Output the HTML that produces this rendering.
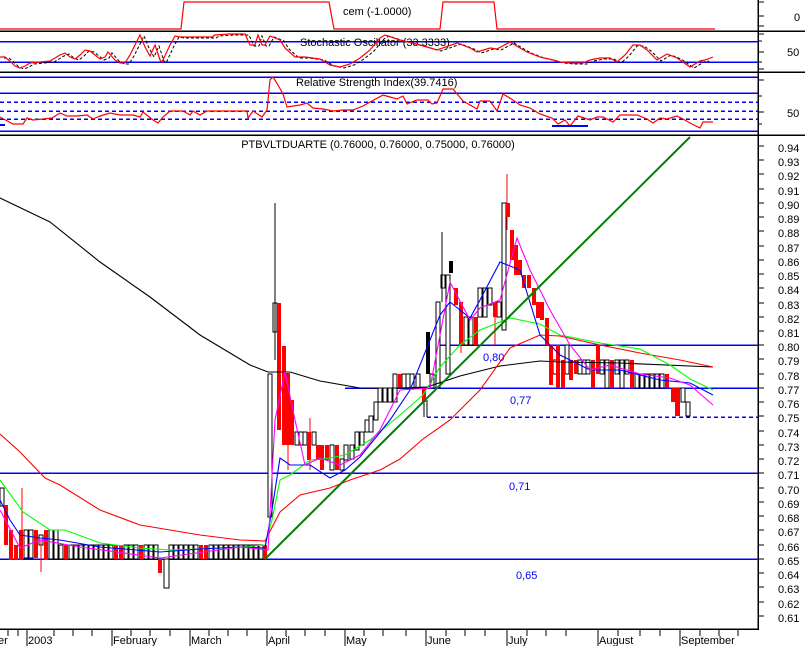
<!DOCTYPE html>
<html><head><meta charset="utf-8"><style>
html,body{margin:0;padding:0;background:#fff;}
svg{display:block;font-family:"Liberation Sans",sans-serif;}
</style></head><body>
<svg width="805" height="646" viewBox="0 0 805 646" xmlns="http://www.w3.org/2000/svg" shape-rendering="crispEdges">
<rect width="805" height="646" fill="#fff"/>
<g stroke="#000" stroke-width="1.5">
<line x1="0" y1="31" x2="805" y2="31"/>
<line x1="0" y1="72" x2="805" y2="72"/>
<line x1="0" y1="135" x2="805" y2="135"/>
<line x1="758" y1="0" x2="758" y2="630"/>
<line x1="0" y1="629" x2="758" y2="629"/>
</g>
<!-- top panel -->
<polyline fill="none" stroke="#f00" stroke-width="1.2" shape-rendering="auto" points="0,29 181,29 184,2 329,2 334,29 440,29 443,2 494,2 497,29 715,29"/>
<text x="343" y="15" font-size="11">cem (-1.0000)</text>
<g stroke="#000"><line x1="758" y1="2" x2="764" y2="2"/><line x1="758" y1="16" x2="764" y2="16"/><line x1="758" y1="26" x2="764" y2="26"/></g>
<text x="794" y="21" font-size="11">0</text>
<!-- stochastic -->
<g stroke="#00f" stroke-width="1.5"><line x1="0" y1="41.5" x2="758" y2="41.5"/><line x1="0" y1="62" x2="758" y2="62"/></g>
<text x="300" y="46" font-size="11">Stochastic Oscillator (33.3333)</text>
<g fill="none" shape-rendering="auto">
<polyline stroke="#000" stroke-dasharray="3,2" stroke-width="1" transform="translate(4,1)" points="0,57 5,57 12,63 15,66 20,68 25,66 30,63 40,62 50,61 55,58 60,55 65,53 70,57 75,59 80,55 85,50 90,51 95,55 100,59 105,57 108,52 115,60 120,63 125,63 130,55 135,45 140,35 145,47 150,56 155,45 160,60 162,62 170,45 175,36 180,37 212,37 215,35 230,34 245,34 250,45 255,45 258,35 262,45 265,45 270,36 275,38 280,40 285,48 295,57 305,57 320,59 325,62 330,65 340,67 350,64 360,58 370,50 375,44 380,38 385,35 400,40 420,45 437,50 457,43 470,48 477,52 490,48 497,49 510,42 520,48 527,52 540,57 553,60 560,62 570,63 583,63 590,60 600,58 610,58 617,62 625,55 633,45 640,45 647,50 657,60 667,54 677,58 690,67 700,61 705,60"/>
<polyline stroke="#f00" stroke-width="1.2" points="0,57 5,57 12,63 15,66 20,68 25,66 30,63 40,62 50,61 55,58 60,55 65,53 70,57 75,59 80,55 85,50 90,51 95,55 100,59 105,57 108,52 115,60 120,63 125,63 130,55 135,45 140,35 145,47 150,56 155,45 160,60 162,62 170,45 175,36 180,37 212,37 215,35 230,34 245,34 250,45 255,45 258,35 262,45 265,45 270,36 275,38 280,40 285,48 295,57 305,57 320,59 325,62 330,65 340,67 350,64 360,58 370,50 375,44 380,38 385,35 400,40 420,45 437,50 457,43 470,48 477,52 490,48 497,49 510,42 520,48 527,52 540,57 553,60 560,62 570,63 583,63 590,60 600,58 610,58 617,62 625,55 633,45 640,45 647,50 657,60 667,54 677,58 690,67 700,61 705,60 713,57"/>
</g>
<g stroke="#000"><line x1="758" y1="34" x2="764" y2="34"/><line x1="758" y1="41" x2="762" y2="41"/><line x1="758" y1="52" x2="764" y2="52"/><line x1="758" y1="62" x2="762" y2="62"/><line x1="758" y1="69" x2="764" y2="69"/></g>
<text x="787" y="56" font-size="11">50</text>
<!-- RSI -->
<g stroke="#00f" stroke-width="1.5"><line x1="0" y1="77" x2="758" y2="77"/><line x1="0" y1="93" x2="758" y2="93"/><line x1="0" y1="131" x2="758" y2="131"/></g>
<g stroke="#00f" stroke-width="1.5" stroke-dasharray="4,3"><line x1="0" y1="102" x2="758" y2="102"/><line x1="0" y1="111" x2="758" y2="111"/><line x1="0" y1="119" x2="758" y2="119"/></g>
<text x="296" y="86" font-size="11">Relative Strength Index(39.7416)</text>
<polyline fill="none" stroke="#f00" stroke-width="1.2" shape-rendering="auto" points="0,117 13,124 23,124 27,118 33,120 43,119 52,118 60,113 67,116 77,116 87,115 93,119 100,116 110,113 120,115 133,115 140,117 143,112 153,120 158,123 163,117 170,111 183,111 190,115 193,111 200,115 207,111 247,111 248,118 253,111 262,117 267,110 270,80 273,77 278,85 283,94 287,107 300,105 307,103 313,108 323,109 333,111 343,110 353,110 363,106 370,102 383,95 390,97 397,99 403,96 407,104 417,100 428,100 432,104 437,103 443,89 453,89 463,101 477,109 480,101 490,101 497,111 503,94 513,100 520,105 530,108 540,114 552,118 558,124 565,120 570,126 578,116 590,120 597,117 603,117 613,122 620,115 637,115 647,119 653,123 660,118 667,119 677,116 683,119 690,123 700,128 703,122 713,122"/>
<g stroke="#00f" stroke-width="2"><line x1="0" y1="125" x2="5" y2="125"/><line x1="552" y1="126" x2="588" y2="126"/></g>
<g stroke="#000"><line x1="758" y1="80" x2="764" y2="80"/><line x1="758" y1="96" x2="762" y2="96"/><line x1="758" y1="112" x2="764" y2="112"/><line x1="758" y1="124" x2="762" y2="124"/></g>
<text x="787" y="117" font-size="11">50</text>
<text x="378" y="148" font-size="11" text-anchor="middle">PTBVLTDUARTE (0.76000, 0.76000, 0.75000, 0.76000)</text>
<!-- price axis -->
<g stroke="#000">
<line x1="758" y1="146" x2="764" y2="146"/><line x1="758" y1="160" x2="764" y2="160"/><line x1="758" y1="174" x2="764" y2="174"/><line x1="758" y1="189" x2="764" y2="189"/><line x1="758" y1="203" x2="764" y2="203"/><line x1="758" y1="217" x2="764" y2="217"/><line x1="758" y1="231" x2="764" y2="231"/><line x1="758" y1="246" x2="764" y2="246"/><line x1="758" y1="260" x2="764" y2="260"/><line x1="758" y1="274" x2="764" y2="274"/><line x1="758" y1="288" x2="764" y2="288"/><line x1="758" y1="303" x2="764" y2="303"/><line x1="758" y1="317" x2="764" y2="317"/><line x1="758" y1="331" x2="764" y2="331"/><line x1="758" y1="345" x2="764" y2="345"/><line x1="758" y1="359" x2="764" y2="359"/><line x1="758" y1="374" x2="764" y2="374"/><line x1="758" y1="388" x2="764" y2="388"/><line x1="758" y1="402" x2="764" y2="402"/><line x1="758" y1="416" x2="764" y2="416"/><line x1="758" y1="431" x2="764" y2="431"/><line x1="758" y1="445" x2="764" y2="445"/><line x1="758" y1="459" x2="764" y2="459"/><line x1="758" y1="473" x2="764" y2="473"/><line x1="758" y1="488" x2="764" y2="488"/><line x1="758" y1="502" x2="764" y2="502"/><line x1="758" y1="516" x2="764" y2="516"/><line x1="758" y1="530" x2="764" y2="530"/><line x1="758" y1="545" x2="764" y2="545"/><line x1="758" y1="559" x2="764" y2="559"/><line x1="758" y1="573" x2="764" y2="573"/><line x1="758" y1="587" x2="764" y2="587"/><line x1="758" y1="602" x2="764" y2="602"/><line x1="758" y1="616" x2="764" y2="616"/>
</g>
<g font-size="11" fill="#000">
<text x="778" y="152">0.94</text><text x="778" y="166">0.93</text><text x="778" y="180">0.92</text><text x="778" y="195">0.91</text><text x="778" y="209">0.90</text><text x="778" y="223">0.89</text><text x="778" y="237">0.88</text><text x="778" y="252">0.87</text><text x="778" y="266">0.86</text><text x="778" y="280">0.85</text><text x="778" y="294">0.84</text><text x="778" y="309">0.83</text><text x="778" y="323">0.82</text><text x="778" y="337">0.81</text><text x="778" y="351">0.80</text><text x="778" y="365">0.79</text><text x="778" y="380">0.78</text><text x="778" y="394">0.77</text><text x="778" y="408">0.76</text><text x="778" y="422">0.75</text><text x="778" y="437">0.74</text><text x="778" y="451">0.73</text><text x="778" y="465">0.72</text><text x="778" y="479">0.71</text><text x="778" y="494">0.70</text><text x="778" y="508">0.69</text><text x="778" y="522">0.68</text><text x="778" y="536">0.67</text><text x="778" y="551">0.66</text><text x="778" y="565">0.65</text><text x="778" y="579">0.64</text><text x="778" y="593">0.63</text><text x="778" y="608">0.62</text><text x="778" y="622">0.61</text>
</g>
<g stroke="#00f" stroke-width="1.5">
<line x1="440" y1="345" x2="758" y2="345"/>
<line x1="345" y1="388" x2="758" y2="388"/>
<line x1="0" y1="473" x2="758" y2="473"/>
<line x1="0" y1="559" x2="758" y2="559"/>
</g>
<line x1="427" y1="417" x2="758" y2="417" stroke="#00f" stroke-width="1.5" stroke-dasharray="4,3"/>
<line x1="427" y1="400" x2="427" y2="417" stroke="#000"/>
<g font-size="11" fill="#00f"><text x="483" y="361">0,80</text><text x="510" y="404">0,77</text><text x="509" y="490">0,71</text><text x="516" y="579">0,65</text></g>
<!-- candles -->
<g stroke="#000" fill="#fff" stroke-width="1">
<rect x="0" y="488" width="4" height="18"/><rect x="24" y="530" width="4" height="28"/><rect x="29" y="530" width="4" height="28"/><rect x="39" y="535" width="4" height="10"/><rect x="49" y="530" width="4" height="29"/><rect x="54" y="530" width="4" height="29"/><rect x="59" y="545" width="4" height="14"/>
<rect x="69" y="545" width="4" height="14"/><rect x="74" y="545" width="4" height="14"/><rect x="79" y="545" width="4" height="14"/><rect x="84" y="545" width="4" height="14"/><rect x="89" y="545" width="4" height="14"/><rect x="94" y="545" width="4" height="14"/><rect x="99" y="545" width="4" height="14"/><rect x="104" y="545" width="4" height="14"/><rect x="109" y="545" width="4" height="14"/><rect x="124" y="545" width="4" height="14"/><rect x="129" y="545" width="4" height="14"/><rect x="134" y="545" width="4" height="14"/><rect x="144" y="545" width="4" height="14"/><rect x="149" y="545" width="4" height="14"/><rect x="154" y="545" width="4" height="14"/><rect x="164" y="559" width="5" height="29"/><rect x="169" y="545" width="4" height="14"/><rect x="174" y="545" width="4" height="14"/><rect x="179" y="545" width="4" height="14"/><rect x="184" y="545" width="4" height="14"/><rect x="189" y="545" width="4" height="14"/><rect x="194" y="545" width="4" height="14"/><rect x="209" y="545" width="4" height="14"/><rect x="214" y="545" width="4" height="14"/><rect x="219" y="545" width="4" height="14"/><rect x="224" y="545" width="4" height="14"/><rect x="229" y="545" width="4" height="14"/><rect x="234" y="545" width="4" height="14"/><rect x="239" y="545" width="4" height="14"/><rect x="244" y="545" width="4" height="14"/><rect x="249" y="545" width="4" height="14"/><rect x="254" y="545" width="4" height="14"/><rect x="259" y="545" width="4" height="14"/>
<rect x="268" y="374" width="4" height="143"/><rect x="273" y="303" width="4" height="29"/>
<rect x="295" y="432" width="4" height="13"/><rect x="299" y="432" width="4" height="13"/><rect x="303" y="432" width="4" height="13"/><rect x="312" y="432" width="4" height="13"/><rect x="330" y="445" width="4" height="25"/><rect x="340" y="459" width="4" height="11"/><rect x="344" y="445" width="4" height="15"/><rect x="350" y="445" width="4" height="14"/><rect x="355" y="432" width="4" height="18"/><rect x="360" y="432" width="4" height="13"/><rect x="365" y="420" width="4" height="12"/><rect x="369" y="416" width="4" height="16"/><rect x="374" y="402" width="4" height="18"/><rect x="378" y="388" width="4" height="14"/><rect x="383" y="388" width="4" height="14"/><rect x="388" y="388" width="4" height="14"/><rect x="393" y="374" width="4" height="28"/><rect x="402" y="374" width="4" height="14"/><rect x="406" y="374" width="4" height="14"/><rect x="410" y="374" width="4" height="14"/><rect x="416" y="374" width="4" height="14"/><rect x="430" y="374" width="4" height="14"/><rect x="436" y="302" width="4" height="86"/><rect x="441" y="275" width="4" height="13"/><rect x="446" y="275" width="4" height="99"/><rect x="464" y="317" width="4" height="28"/><rect x="469" y="317" width="4" height="28"/><rect x="478" y="288" width="4" height="29"/><rect x="483" y="288" width="4" height="29"/><rect x="488" y="288" width="4" height="17"/><rect x="497" y="302" width="4" height="15"/><rect x="502" y="203" width="4" height="127"/><rect x="553" y="360" width="4" height="14"/><rect x="565" y="345" width="4" height="29"/><rect x="578" y="360" width="4" height="14"/><rect x="582" y="360" width="4" height="14"/><rect x="586" y="360" width="4" height="14"/><rect x="600" y="360" width="4" height="14"/><rect x="605" y="360" width="4" height="28"/><rect x="615" y="360" width="4" height="14"/><rect x="620" y="360" width="4" height="28"/><rect x="625" y="360" width="4" height="14"/><rect x="635" y="374" width="4" height="14"/><rect x="640" y="374" width="4" height="14"/><rect x="645" y="374" width="4" height="14"/><rect x="650" y="374" width="4" height="14"/><rect x="655" y="374" width="4" height="14"/><rect x="660" y="374" width="4" height="14"/><rect x="681" y="388" width="4" height="14"/><rect x="686" y="402" width="4" height="14"/>
</g>
<g fill="#000"><rect x="426" y="332" width="4" height="42"/><rect x="449" y="261" width="4" height="12"/></g>
<g fill="#f00">
<rect x="4" y="505" width="4" height="40"/><rect x="9" y="530" width="4" height="30"/><rect x="14" y="545" width="4" height="15"/><rect x="19" y="530" width="4" height="30"/><rect x="34" y="530" width="4" height="28"/><rect x="44" y="530" width="4" height="30"/><rect x="64" y="545" width="4" height="14"/><rect x="114" y="545" width="4" height="14"/><rect x="119" y="545" width="4" height="14"/><rect x="139" y="545" width="4" height="14"/><rect x="158" y="559" width="4" height="14"/><rect x="199" y="545" width="4" height="14"/><rect x="204" y="545" width="4" height="14"/><rect x="263" y="545" width="4" height="14"/>
<rect x="277" y="303" width="4" height="127"/><rect x="282" y="346" width="4" height="99"/><rect x="286" y="373" width="4" height="72"/><rect x="290" y="400" width="4" height="45"/><rect x="307" y="432" width="4" height="28"/><rect x="316" y="445" width="4" height="15"/><rect x="320" y="445" width="4" height="25"/><rect x="325" y="445" width="4" height="15"/><rect x="335" y="445" width="4" height="25"/><rect x="398" y="374" width="4" height="14"/><rect x="422" y="388" width="4" height="14"/><rect x="454" y="288" width="4" height="17"/><rect x="459" y="302" width="4" height="43"/><rect x="474" y="317" width="4" height="28"/><rect x="493" y="302" width="4" height="15"/><rect x="506" y="203" width="4" height="14"/><rect x="510" y="230" width="4" height="30"/><rect x="514" y="245" width="4" height="30"/><rect x="518" y="260" width="4" height="15"/><rect x="522" y="275" width="4" height="13"/><rect x="527" y="275" width="4" height="13"/><rect x="532" y="288" width="4" height="17"/><rect x="536" y="302" width="4" height="16"/><rect x="540" y="302" width="4" height="18"/><rect x="545" y="318" width="4" height="27"/><rect x="549" y="345" width="4" height="40"/><rect x="556" y="345" width="4" height="43"/><rect x="561" y="360" width="4" height="28"/><rect x="569" y="360" width="4" height="20"/><rect x="574" y="360" width="4" height="14"/><rect x="591" y="360" width="4" height="28"/><rect x="596" y="345" width="4" height="29"/><rect x="610" y="360" width="4" height="28"/><rect x="630" y="360" width="4" height="28"/><rect x="665" y="374" width="4" height="14"/><rect x="671" y="388" width="4" height="14"/><rect x="675" y="388" width="5" height="28"/>
</g>
<g stroke="#000"><line x1="275" y1="203" x2="275" y2="360"/><line x1="442" y1="232" x2="442" y2="302"/><line x1="424" y1="400" x2="424" y2="417"/></g>
<g stroke="#f00"><line x1="22" y1="488" x2="22" y2="560"/><line x1="41" y1="540" x2="41" y2="572"/><line x1="288" y1="445" x2="288" y2="470"/><line x1="310" y1="418" x2="310" y2="470"/><line x1="461" y1="345" x2="461" y2="353"/><line x1="495" y1="317" x2="495" y2="345"/><line x1="507" y1="174" x2="507" y2="230"/></g>
<g fill="none" stroke-width="1.1" shape-rendering="auto">
<polyline stroke="#000" points="0,198 50,222 100,262 150,297 200,335 250,365 268,372 290,372 320,381 360,388 400,388 427,387 460,376 500,366 540,361 560,362 620,363 713,367"/>
<polyline stroke="#f00" points="0,434 20,452 45,478 60,485 100,510 140,525 170,530 200,535 240,540 265,541 280,512 300,495 330,488 350,480 380,470 400,459 423,439 450,420 480,390 510,348 540,335 560,336 600,345 640,353 680,360 713,367"/>
<polyline stroke="#0f0" points="0,480 23,512 50,530 65,530 100,543 140,548 170,550 200,549 240,547 265,545 272,520 280,480 290,475 310,460 330,458 345,455 370,440 400,415 423,395 440,367 460,345 480,330 510,318 540,324 560,335 600,343 640,349 670,365 690,379 713,390"/>
<polyline stroke="#00f" points="0,500 10,520 20,535 40,538 60,540 100,547 160,552 200,549 240,547 265,548 272,510 280,458 290,465 310,465 330,478 345,470 360,457 390,420 410,390 440,315 450,302 470,318 480,300 500,262 520,270 540,335 560,355 590,370 620,370 660,380 690,383 713,395"/>
<polyline stroke="#f0f" points="0,510 20,548 40,540 80,547 160,558 240,547 268,550 275,420 285,372 295,420 305,465 320,458 340,465 360,455 380,430 400,390 430,388 450,282 470,320 480,308 500,300 517,238 530,270 550,310 570,345 590,370 610,365 640,374 670,378 690,385 713,405"/>
<line stroke="#008000" stroke-width="2" x1="265" y1="559" x2="690" y2="137"/>
</g>
<g stroke="#000">
<line x1="8" y1="629" x2="8" y2="636"/><line x1="18" y1="629" x2="18" y2="636"/><line x1="27" y1="629" x2="27" y2="646"/><line x1="54" y1="629" x2="54" y2="636"/><line x1="73" y1="629" x2="73" y2="636"/><line x1="92" y1="629" x2="92" y2="636"/><line x1="112" y1="629" x2="112" y2="646"/><line x1="131" y1="629" x2="131" y2="636"/><line x1="150" y1="629" x2="150" y2="636"/><line x1="170" y1="629" x2="170" y2="636"/><line x1="190" y1="629" x2="190" y2="646"/><line x1="209" y1="629" x2="209" y2="636"/><line x1="228" y1="629" x2="228" y2="636"/><line x1="247" y1="629" x2="247" y2="636"/><line x1="267" y1="629" x2="267" y2="646"/><line x1="286" y1="629" x2="286" y2="636"/><line x1="305" y1="629" x2="305" y2="636"/><line x1="325" y1="629" x2="325" y2="636"/><line x1="345" y1="629" x2="345" y2="646"/><line x1="364" y1="629" x2="364" y2="636"/><line x1="383" y1="629" x2="383" y2="636"/><line x1="406" y1="629" x2="406" y2="636"/><line x1="426" y1="629" x2="426" y2="646"/><line x1="446" y1="629" x2="446" y2="636"/><line x1="465" y1="629" x2="465" y2="636"/><line x1="485" y1="629" x2="485" y2="636"/><line x1="507" y1="629" x2="507" y2="646"/><line x1="527" y1="629" x2="527" y2="636"/><line x1="546" y1="629" x2="546" y2="636"/><line x1="566" y1="629" x2="566" y2="636"/><line x1="598" y1="629" x2="598" y2="646"/><line x1="618" y1="629" x2="618" y2="636"/><line x1="640" y1="629" x2="640" y2="636"/><line x1="660" y1="629" x2="660" y2="636"/><line x1="680" y1="629" x2="680" y2="646"/><line x1="700" y1="629" x2="700" y2="636"/><line x1="719" y1="629" x2="719" y2="636"/><line x1="738" y1="629" x2="738" y2="636"/>
</g>
<g font-size="11" fill="#000"><text x="-2" y="644">er</text><text x="28" y="644">2003</text><text x="113" y="644">February</text><text x="191" y="644">March</text><text x="268" y="644">April</text><text x="346" y="644">May</text><text x="427" y="644">June</text><text x="508" y="644">July</text><text x="599" y="644">August</text><text x="681" y="644">September</text></g>
</svg>
</body></html>
